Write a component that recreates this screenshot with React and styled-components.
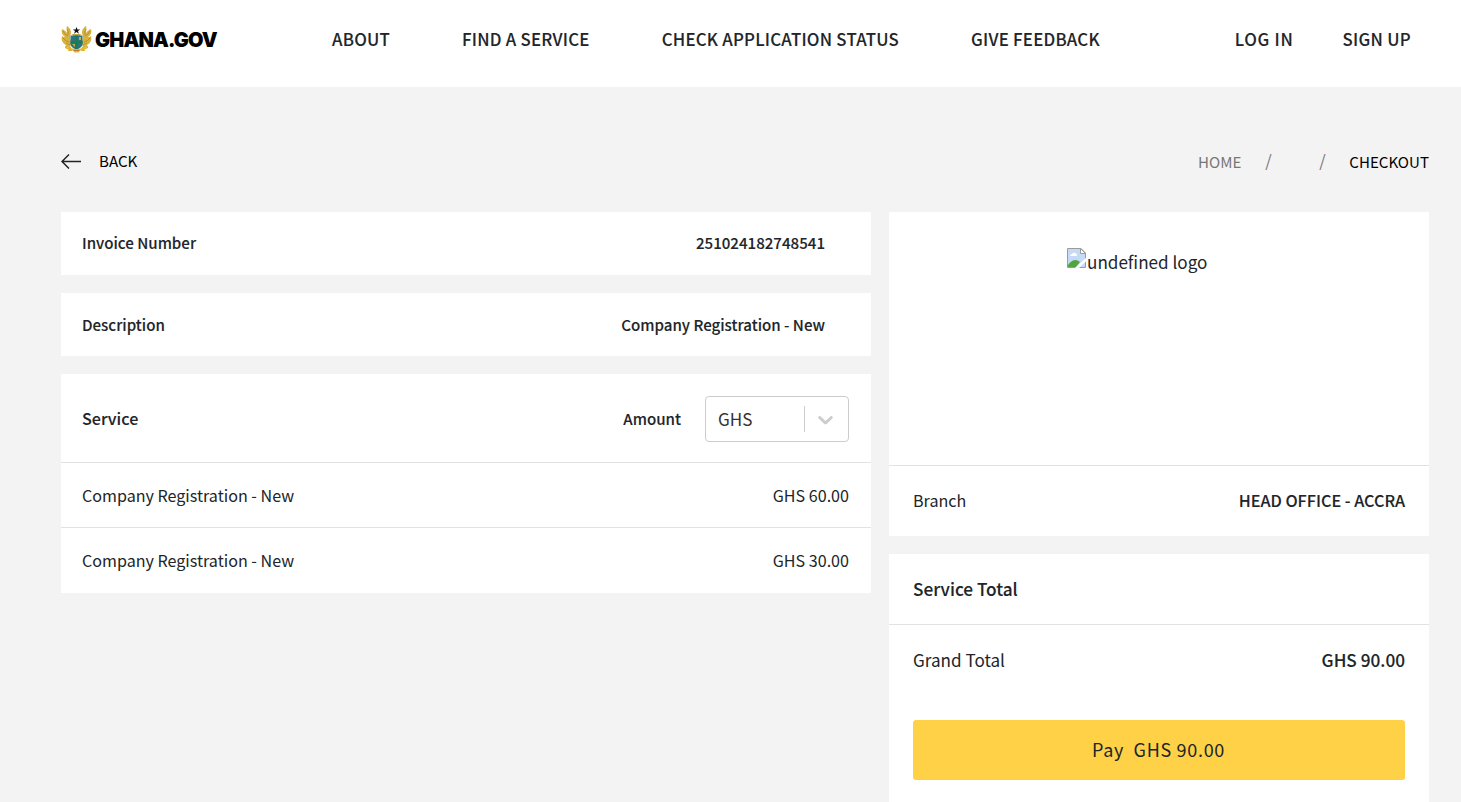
import React from "react";
import styled, { createGlobalStyle } from "styled-components";

const GlobalStyle = createGlobalStyle`
  *, *::before, *::after { box-sizing: border-box; }
  html, body { margin: 0; height: 100%; overflow: hidden; }
  body {
    background: #f3f3f3;
    color: #212529;
    font-family: "Source Sans Pro", "Noto Sans CJK SC", "Noto Sans", sans-serif;
    font-size: 16px;
    line-height: 24px;
  }
`;

const Page = styled.div`
  height: 802px;
  overflow: hidden;
`;

const Header = styled.header`
  display: flex;
  align-items: flex-start;
  height: 87px;
  padding: 25px 50px 0 61px;
  background: #fff;
`;

const Brand = styled.div`
  display: flex;
  gap: 3px;
  width: 271px;
  height: 28px;
`;

const BrandName = styled.span`
  color: #000;
  font-family: Inter, "Liberation Sans", sans-serif;
  font-size: 20px;
  font-weight: 900;
  letter-spacing: -0.85px;
  line-height: 30px;
`;

const Nav = styled.nav`
  display: flex;
  gap: ${({ $gap }) => $gap}px;
  padding-top: 2px;
  margin-left: ${({ $push }) => ($push ? "auto" : "0")};
`;

const NavLink = styled.a`
  font-weight: 500;
  font-size: 16.8px;
  line-height: 24px;
  letter-spacing: ${({ $ls }) => $ls ?? 0.25}px;
  -webkit-text-stroke: 0.1px;
  white-space: nowrap;
`;

const TopBar = styled.div`
  display: flex;
  justify-content: space-between;
  height: 125px;
  padding: 62px 32px 0 61px;
  color: #000;
  font-size: 15.1px;
`;

const Back = styled.a`
  display: flex;
  align-items: center;
  gap: 18px;
  height: 24px;
`;

const BackLabel = styled.span`
  padding-bottom: 2px;
`;

const Crumbs = styled.div`
  display: flex;
`;

const Crumb = styled.span`
  color: ${({ $active }) => ($active ? "#000" : "#777")};
`;

const Slash = styled.span`
  width: ${({ $w }) => $w}px;
  padding-left: ${({ $pad }) => $pad}px;
  color: #777;
  font-size: 16.5px;
  line-height: 23px;
`;

const Columns = styled.main`
  display: grid;
  grid-template-columns: 810px 540px;
  gap: 18px;
  padding-left: 61px;
`;

const Stack = styled.div`
  display: flex;
  flex-direction: column;
  gap: 18px;
`;

const Card = styled.section`
  background: #fff;
`;

const Row = styled.div`
  display: flex;
  align-items: center;
  justify-content: space-between;
  height: ${({ $h }) => $h}px;
  padding: ${({ $t }) => $t ?? 0}px ${({ $r }) => $r ?? 22}px ${({ $b }) => $b ?? 0}px ${({ $l }) => $l ?? 21}px;
  border-bottom: ${({ $line }) => ($line ? "1px solid #e2e2e2" : "0")};
`;

const Text = styled.span`
  padding-bottom: ${({ $lift }) => $lift ?? 0}px;
  font-size: ${({ $size }) => $size ?? 16.1}px;
  font-weight: ${({ $bold }) => ($bold ? 500 : 400)};
  -webkit-text-stroke: ${({ $bold }) => ($bold ? "0.1px" : "0")};
  white-space: nowrap;
`;

const AmountGroup = styled.div`
  display: flex;
  align-items: center;
  gap: 24px;
`;

const Select = styled.div`
  display: flex;
  align-items: center;
  width: 144px;
  height: 46px;
  border: 1px solid #ccc;
  border-radius: 4px;
  color: #333;
`;

const SelectValue = styled.span`
  flex: 1;
  padding-left: 12px;
  font-size: 17.1px;
`;

const Divider = styled.span`
  width: 1px;
  height: 26px;
  background: #ccc;
`;

const Indicator = styled.span`
  display: flex;
  justify-content: center;
  width: 43px;
  padding-right: 2px;
`;

const LogoArea = styled.div`
  display: flex;
  height: 254px;
  padding: 36px 0 0 178px;
  border-bottom: 1px solid #e2e2e2;
`;

const AltText = styled(Text)`
  padding-top: 2px;
`;

const PayButton = styled.button`
  display: block;
  width: 492px;
  height: 60px;
  margin: 24px 24px 40px;
  padding: 0 1px 2px 0;
  border: 0;
  border-radius: 3px;
  background: #ffd147;
  color: #212529;
  font: inherit;
  font-size: 18px;
  letter-spacing: 0.7px;
  white-space: pre;
`;

function CoatOfArms() {
  return (
    <svg width="31" height="28" viewBox="0 0 31 28">
      <g fill="#d9b23c">
        <path d="M6 1C9 3 11 6 9.500 10C8.500 13 9 15 11 17L9 22L5 20C1 18 0 14 1 11C2 12 3 12 4 12C1 10 0 7 1 4C3 5 5 6 6 8C6 5 5 3 6 1Z" />
        <path d="M25 1C22 3 20 6 21.500 10C22.500 13 22 15 20 17L22 22L26 20C30 18 31 14 30 11C29 12 28 12 27 12C30 10 31 7 30 4C28 5 26 6 25 8C25 5 26 3 25 1Z" />
        <path d="M5 20L10 22L11 26H7L8 23L4 22ZM26 20L21 22L20 26H24L23 23L27 22Z" />
      </g>
      <g fill="none" stroke="#ad842b" strokeWidth=".7">
        <path d="M6 4Q8 7 7 10M2 6Q4 10 7 11M2 13Q4 16 8 17M5 18L9 20" />
        <path d="M25 4Q23 7 24 10M29 6Q27 10 24 11M29 13Q27 16 23 17M26 18L22 20" />
      </g>
      <path d="M15.500 2l1 2.500h2.700L17 6.100l.9 2.600-2.400-1.600-2.400 1.600.9-2.600-2.200-1.600h2.700z" fill="#111" />
      <path d="M11 9h9l-1 2h-7z" fill="#c5a347" />
      <path d="M9.500 10.500h12v9q-1 3.500-6 5q-5-1.500-6-5z" fill="#2d7286" />
      <path d="M14 10.500h3v14h-3zM9.500 16h12v2.500h-12z" fill="#178052" />
      <path d="M11 19h3v3zM18 12h2v3h-2z" fill="#d2a83a" />
      <path d="M4 21Q8 24 12 23.500Q15.500 25 19 23.500Q23 24 27 21V23Q22 25.500 19 25.500L17.500 27.500H13.500L12 25.500Q8 25.500 4 23Z" fill="#edb51f" />
      <path d="M12.500 25.500h6" stroke="#c57725" strokeWidth="1" />
    </svg>
  );
}

function ArrowLeft() {
  return (
    <svg width="20" height="16" viewBox="0 0 20 16" fill="none" stroke="#222" strokeWidth="1.500">
      <path d="M20 8.500H1M8 1.500L1 8.500L8 15.500" />
    </svg>
  );
}

function Chevron() {
  return (
    <svg width="25" height="25" viewBox="0 0 20 20" fill="#ccc">
      <path d="M4.516 7.548c0.436-0.446 1.043-0.481 1.576 0l3.908 3.747 3.908-3.747c0.533-0.481 1.141-0.446 1.574 0 0.436 0.445 0.408 1.197 0 1.615-0.406 0.418-4.695 4.502-4.695 4.502-0.217 0.223-0.502 0.335-0.787 0.335s-0.570-0.112-0.789-0.335c0 0-4.287-4.084-4.695-4.502s-0.436-1.170 0-1.615z" />
    </svg>
  );
}

function BrokenImage() {
  return (
    <svg width="20" height="20" viewBox="0 0 20 20">
      <path d="M.5.500H14L18.500 5V19.500H.5Z" fill="#c6d9f7" stroke="#9b9b9b" />
      <path d="M3 8q0-2 2-2q1-2 3-1q2 0 2 3z" fill="#fff" />
      <path d="M1 19V17Q7 9 13 14L9 19Z" fill="#4fa63b" />
      <path d="M20 9V12.500L12 20H8Z" fill="#fff" />
      <path d="M13.500.500V5.500H18.500Z" fill="#fff" stroke="#9b9b9b" />
    </svg>
  );
}

const items = [
  { name: "Company Registration - New", price: "GHS 60.00" },
  { name: "Company Registration - New", price: "GHS 30.00" },
];

export default function App() {
  return (
    <Page>
      <GlobalStyle />
      <Header>
        <Brand>
          <CoatOfArms />
          <BrandName>GHANA.GOV</BrandName>
        </Brand>
        <Nav $gap={72}>
          <NavLink>ABOUT</NavLink>
          <NavLink>FIND A SERVICE</NavLink>
          <NavLink>CHECK APPLICATION STATUS</NavLink>
          <NavLink>GIVE FEEDBACK</NavLink>
        </Nav>
        <Nav $gap={49} $push>
          <NavLink $ls={0.7}>LOG IN</NavLink>
          <NavLink $ls={0.3}>SIGN UP</NavLink>
        </Nav>
      </Header>
      <TopBar>
        <Back>
          <ArrowLeft />
          <BackLabel>BACK</BackLabel>
        </Back>
        <Crumbs>
          <Crumb>HOME</Crumb>
          <Slash $w={78} $pad={24}>/</Slash>
          <Slash $w={30} $pad={0}>/</Slash>
          <Crumb $active>CHECKOUT</Crumb>
        </Crumbs>
      </TopBar>
      <Columns>
        <Stack>
          <Card>
            <Row $h={63} $r={46} $b={3}>
              <Text $bold $size={15.1}>Invoice Number</Text>
              <Text $bold $size={15.1}>251024182748541</Text>
            </Row>
          </Card>
          <Card>
            <Row $h={63} $r={46} $b={2}>
              <Text $bold $size={15.1}>Description</Text>
              <Text $bold $size={15.1}>Company Registration - New</Text>
            </Row>
          </Card>
          <Card>
            <Row $h={89} $t={2} $line>
              <Text $bold $lift={2}>Service</Text>
              <AmountGroup>
                <Text $bold $size={15.1} $lift={2}>Amount</Text>
                <Select>
                  <SelectValue>GHS</SelectValue>
                  <Divider />
                  <Indicator><Chevron /></Indicator>
                </Select>
              </AmountGroup>
            </Row>
            {items.map((item, i) => (
              <Row key={item.price} $h={65} $b={i * 2} $line={i < items.length - 1}>
                <Text>{item.name}</Text>
                <Text>{item.price}</Text>
              </Row>
            ))}
          </Card>
        </Stack>
        <Stack>
          <Card>
            <LogoArea>
              <BrokenImage />
              <AltText $size={17.1}>undefined logo</AltText>
            </LogoArea>
            <Row $h={70} $l={24} $r={24} $b={2}>
              <Text $size={16.1}>Branch</Text>
              <Text $size={16.2} $bold>HEAD OFFICE - ACCRA</Text>
            </Row>
          </Card>
          <Card>
            <Row $h={71} $l={24} $r={24} $line>
              <Text $size={17.2} $bold>Service Total</Text>
            </Row>
            <Row $h={71} $l={24} $r={24} $b={1}>
              <Text $size={17.1}>Grand Total</Text>
              <Text $size={17.2} $bold>GHS 90.00</Text>
            </Row>
            <PayButton>{"Pay  GHS 90.00"}</PayButton>
          </Card>
        </Stack>
      </Columns>
    </Page>
  );
}
